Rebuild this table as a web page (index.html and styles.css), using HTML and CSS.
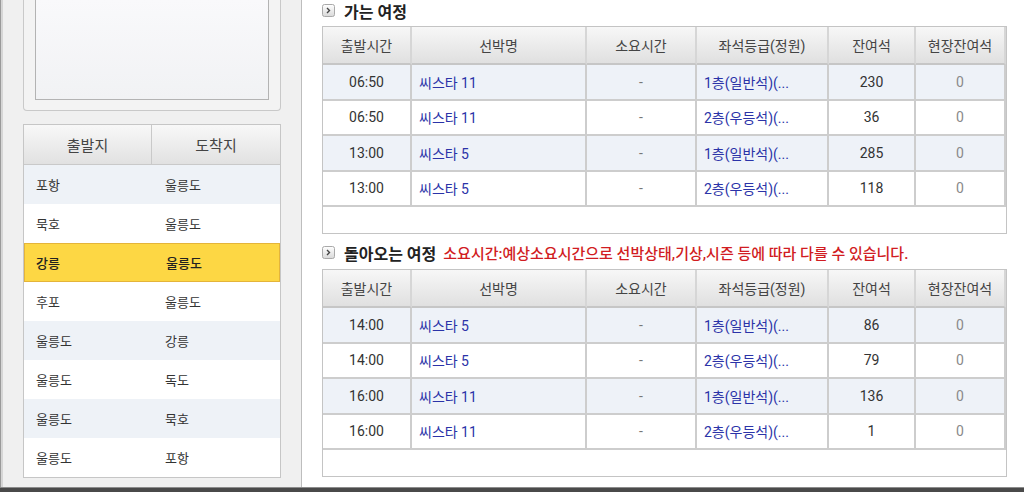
FILE: index.html
```html
<!DOCTYPE html>
<html lang="ko">
<head>
<meta charset="utf-8">
<title>여정 조회</title>
<link rel="stylesheet" href="styles.css">
</head>
<body>
<div class="screen">
  <div class="main">
    <div class="edge"></div>
    <aside class="side">
      <div class="preview"><div class="preview-inner"></div></div>
      <div class="route-table">
        <div class="route-head"><span>출발지</span><span>도착지</span></div>
        <div class="route-row odd"><span>포항</span><span>울릉도</span></div>
        <div class="route-row"><span>묵호</span><span>울릉도</span></div>
        <div class="route-row selected"><span>강릉</span><span>울릉도</span></div>
        <div class="route-row"><span>후포</span><span>울릉도</span></div>
        <div class="route-row odd"><span>울릉도</span><span>강릉</span></div>
        <div class="route-row"><span>울릉도</span><span>독도</span></div>
        <div class="route-row odd"><span>울릉도</span><span>묵호</span></div>
        <div class="route-row"><span>울릉도</span><span>포항</span></div>
      </div>
    </aside>
    <section class="content">
      <h2 class="title first">
        <svg class="arrow" width="13" height="13" viewBox="0 0 13 13"><defs><linearGradient id="ag" x1="0" y1="0" x2="0" y2="1"><stop offset="0" stop-color="#ffffff"/><stop offset="1" stop-color="#d9d9d9"/></linearGradient></defs><rect x="0.5" y="0.5" width="12" height="12" rx="2" fill="url(#ag)" stroke="#a9a9a9"/><polyline points="5,4 7.5,6.5 5,9" fill="none" stroke="#444" stroke-width="1.4"/></svg>
        가는 여정
      </h2>
      <div class="grid-box">
        <table class="sched">
          <colgroup><col class="c1"><col class="c2"><col class="c3"><col class="c4"><col class="c5"><col class="c6"></colgroup>
          <thead><tr><th>출발시간</th><th>선박명</th><th>소요시간</th><th>좌석등급(정원)</th><th>잔여석</th><th>현장잔여석</th></tr></thead>
          <tbody>
            <tr class="odd"><td class="time">06:50</td><td class="link">씨스타 11</td><td class="dash">-</td><td class="link">1층(일반석)(...</td><td class="num">230</td><td class="zero">0</td></tr>
            <tr><td class="time">06:50</td><td class="link">씨스타 11</td><td class="dash">-</td><td class="link">2층(우등석)(...</td><td class="num">36</td><td class="zero">0</td></tr>
            <tr class="odd"><td class="time">13:00</td><td class="link">씨스타 5</td><td class="dash">-</td><td class="link">1층(일반석)(...</td><td class="num">285</td><td class="zero">0</td></tr>
            <tr><td class="time">13:00</td><td class="link">씨스타 5</td><td class="dash">-</td><td class="link">2층(우등석)(...</td><td class="num">118</td><td class="zero">0</td></tr>
          </tbody>
        </table>
      </div>
      <h2 class="title second">
        <svg class="arrow" width="13" height="13" viewBox="0 0 13 13"><rect x="0.5" y="0.5" width="12" height="12" rx="2" fill="url(#ag)" stroke="#a9a9a9"/><polyline points="5,4 7.5,6.5 5,9" fill="none" stroke="#444" stroke-width="1.4"/></svg>
        돌아오는 여정 <span class="note">소요시간:예상소요시간으로 선박상태,기상,시즌 등에 따라 다를 수 있습니다.</span>
      </h2>
      <div class="grid-box">
        <table class="sched">
          <colgroup><col class="c1"><col class="c2"><col class="c3"><col class="c4"><col class="c5"><col class="c6"></colgroup>
          <thead><tr><th>출발시간</th><th>선박명</th><th>소요시간</th><th>좌석등급(정원)</th><th>잔여석</th><th>현장잔여석</th></tr></thead>
          <tbody>
            <tr class="odd"><td class="time">14:00</td><td class="link">씨스타 5</td><td class="dash">-</td><td class="link">1층(일반석)(...</td><td class="num">86</td><td class="zero">0</td></tr>
            <tr><td class="time">14:00</td><td class="link">씨스타 5</td><td class="dash">-</td><td class="link">2층(우등석)(...</td><td class="num">79</td><td class="zero">0</td></tr>
            <tr class="odd"><td class="time">16:00</td><td class="link">씨스타 11</td><td class="dash">-</td><td class="link">1층(일반석)(...</td><td class="num">136</td><td class="zero">0</td></tr>
            <tr><td class="time">16:00</td><td class="link">씨스타 11</td><td class="dash">-</td><td class="link">2층(우등석)(...</td><td class="num">1</td><td class="zero">0</td></tr>
          </tbody>
        </table>
      </div>
    </section>
  </div>
  <div class="bottom-bar"></div>
</div>
</body>
</html>
```
FILE: styles.css
```css
* { box-sizing: border-box; }
html, body { margin: 0; padding: 0; background: #ffffff; }
body {
  font-family: Roboto, "Noto Sans CJK KR", sans-serif;
  color: #333;
  width: 1024px;
  height: 492px;
  overflow: hidden;
}
.screen { display: flex; flex-direction: column; height: 492px; }
.main { display: flex; height: 487px; }
.edge {
  width: 3px;
  background: #d6d6d6;
  border-left: 1px solid #9a9a9a;
}
.side {
  width: 299px;
  background: #f0f0f0;
  border-right: 1px solid #bdbdbd;
  padding-left: 20px;
}
.preview {
  width: 258px;
  height: 111px;
  border: 1px solid #c9c9c9;
  border-top: none;
  border-radius: 0 0 4px 4px;
  background: #f3f3f3;
  padding: 0 11px;
}
.preview-inner {
  height: 100px;
  border: 1px solid #b3b3b3;
  border-top: none;
  background: linear-gradient(#f9f9fb, #f1f2f4);
}
.route-table {
  margin-top: 13px;
  width: 258px;
  border: 1px solid #c6c6c6;
  background: #fff;
}
.route-head {
  display: grid;
  grid-template-columns: 128px 1fr;
  height: 40px;
  background: linear-gradient(#f8f8f8, #e1e1e1);
  border-bottom: 1px solid #c9c9c9;
}
.route-head span {
  display: flex;
  align-items: center;
  justify-content: center;
  font-size: 15px;
  color: #444;
}
.route-head span:first-child { border-right: 1px solid #c9c9c9; }
.route-row {
  display: grid;
  grid-template-columns: 128px 1fr;
  height: 39px;
  align-items: center;
  font-size: 13px;
  color: #333;
}
.route-row span { padding-left: 12px; }
.route-row span:last-child { padding-left: 13px; }
.route-row.odd { background: #eef2f7; }
.route-row.selected {
  background: #fdd744;
  border: 1px solid #e4b43a;
  color: #222;
  font-weight: 500;
}
.route-row.selected span:first-child { padding-left: 11px; }
.content {
  flex: 1;
  padding-left: 20px;
}
.title {
  margin: 0;
  display: flex;
  align-items: center;
  font-size: 16px;
  font-weight: 700;
  color: #222;
  white-space: nowrap;
}
.title.first { height: 26px; padding-bottom: 5px; }
.title.second { height: 35px; padding-top: 2px; }
.arrow { margin-right: 9px; flex: none; }
.note {
  margin-left: 7px;
  font-size: 15px;
  font-weight: 500;
  color: #d11c22;
}
.grid-box {
  width: 685px;
  height: 208px;
  border: 1px solid #c4c4c4;
  background: #fff;
}
.sched {
  width: 683px;
  table-layout: fixed;
  border-collapse: separate;
  border-spacing: 0;
}
.c1 { width: 89px; }
.c2 { width: 175px; }
.c3 { width: 110px; }
.c4 { width: 132px; }
.c5 { width: 87px; }
.c6 { width: 90px; }
.sched th {
  height: 38px;
  padding: 0;
  font-size: 14px;
  font-weight: 400;
  color: #444;
  background: linear-gradient(#f7f7f7, #e0e0e0);
  border-right: 2px solid #d6d6d6;
  border-bottom: 2px solid #c6c6c6;
  text-align: center;
}
.sched td {
  height: 35.5px;
  padding: 0;
  font-size: 14px;
  border-right: 2px solid #cdcdcd;
  border-bottom: 2px solid #cdcdcd;
  white-space: nowrap;
  overflow: hidden;
}
.sched tr.odd td { background: #eef2f8; }
.time { text-align: center; color: #333; }
.link { color: #2b33a8; padding-left: 7px !important; }
.dash { text-align: center; color: #777; }
.num { text-align: center; color: #333; }
.zero { text-align: center; color: #8a8a8a; }
.bottom-bar {
  height: 5px;
  background: #4a4a4a;
  border-top: 1px solid #8c8c8c;
}
```
